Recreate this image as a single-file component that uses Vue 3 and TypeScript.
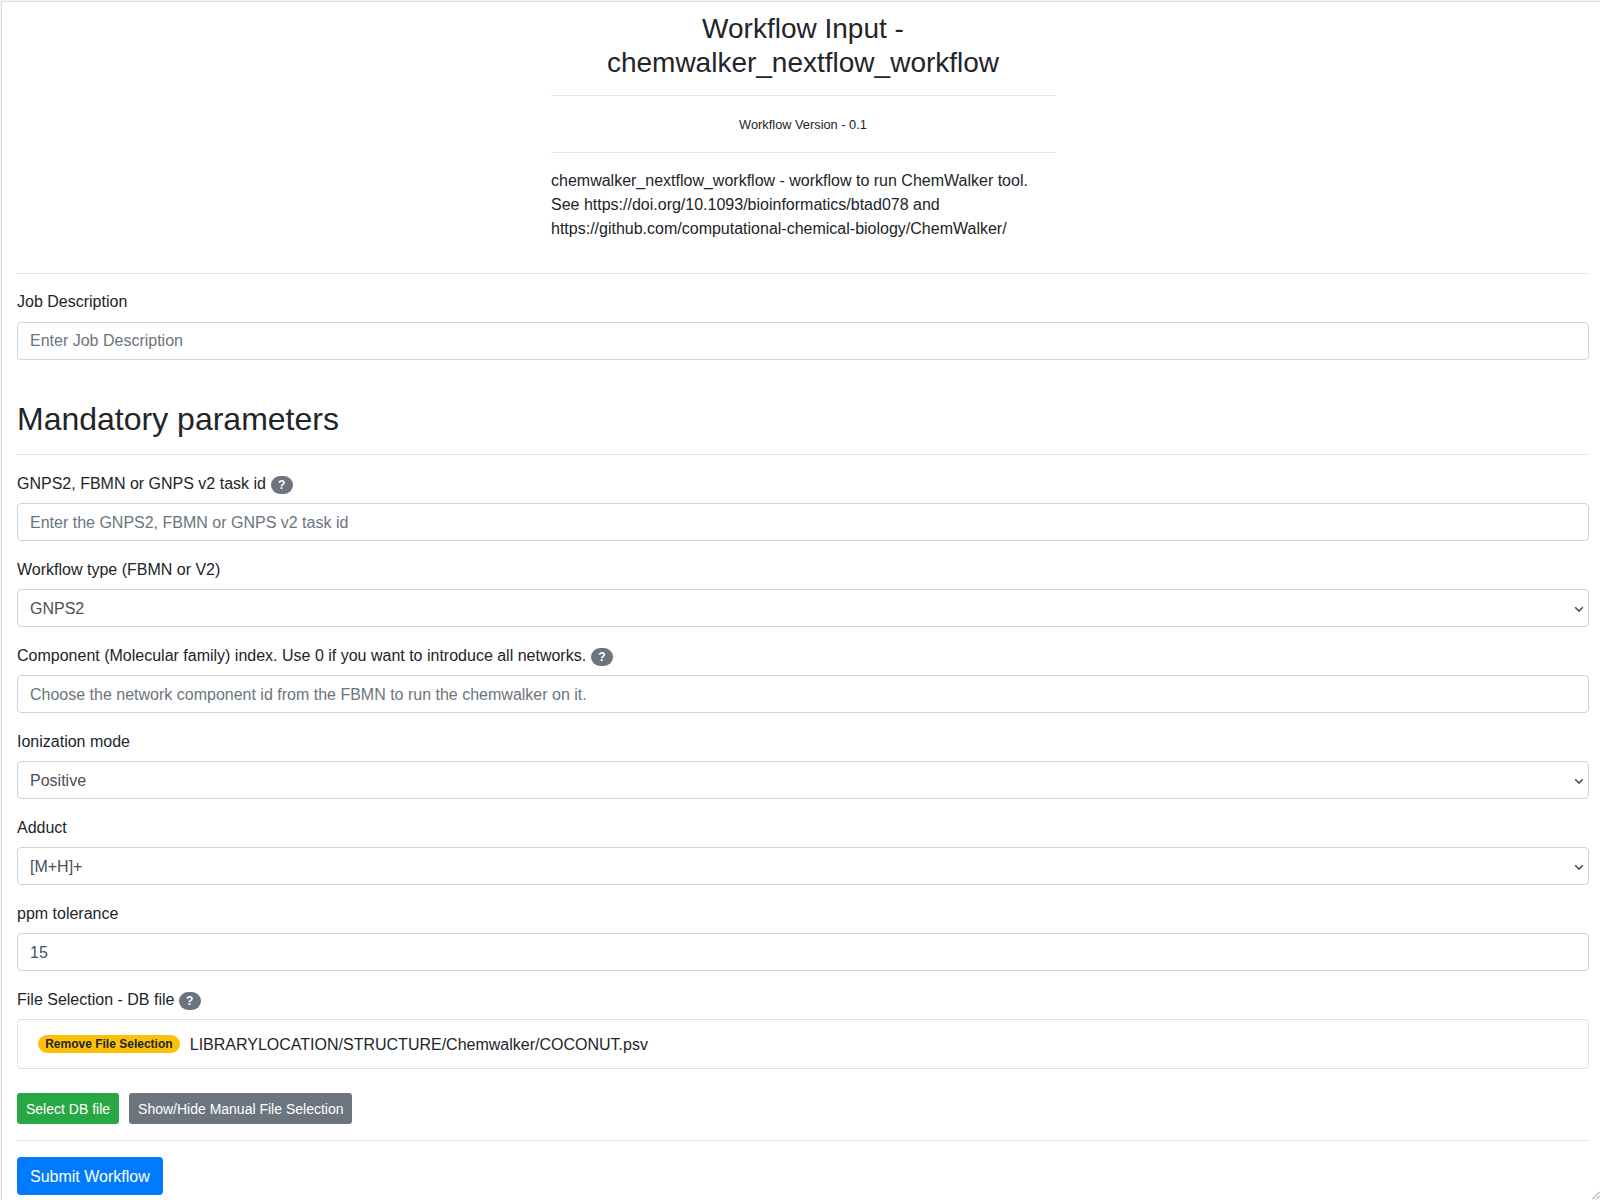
<script setup lang="ts">
import { ref } from 'vue'

interface Field {
  id: string
  label: string
  kind: 'text' | 'select'
  value: string
  placeholder?: string
  help?: boolean
}

const description = ref('')
const fields = ref<Field[]>([
  { id: 'task', label: 'GNPS2, FBMN or GNPS v2 task id', kind: 'text', value: '', placeholder: 'Enter the GNPS2, FBMN or GNPS v2 task id', help: true },
  { id: 'type', label: 'Workflow type (FBMN or V2)', kind: 'select', value: 'GNPS2' },
  { id: 'component', label: 'Component (Molecular family) index. Use 0 if you want to introduce all networks.', kind: 'text', value: '', placeholder: 'Choose the network component id from the FBMN to run the chemwalker on it.', help: true },
  { id: 'mode', label: 'Ionization mode', kind: 'select', value: 'Positive' },
  { id: 'adduct', label: 'Adduct', kind: 'select', value: '[M+H]+' },
  { id: 'ppm', label: 'ppm tolerance', kind: 'text', value: '15' },
])
</script>

<template>
  <div class="page">
    <div class="card">
      <header class="intro">
        <h3>Workflow Input - chemwalker_nextflow_workflow</h3>
        <hr />
        <div class="version"><span>Workflow Version - 0.1</span></div>
        <hr />
        <p>chemwalker_nextflow_workflow - workflow to run ChemWalker tool. See https://doi.org/10.1093/bioinformatics/btad078 and https://github.com/computational-chemical-biology/ChemWalker/</p>
      </header>
      <hr class="split" />
      <div class="group">
        <label for="description">Job Description</label>
        <input id="description" v-model="description" class="control" placeholder="Enter Job Description" />
      </div>
      <h2>Mandatory parameters</h2>
      <hr />
      <section class="params">
        <div v-for="f in fields" :key="f.id" class="group">
          <label :for="f.id">{{ f.label }} <span v-if="f.help" class="badge help shifted">?</span></label>
          <div v-if="f.kind === 'select'" class="select">
            <select :id="f.id" v-model="f.value" class="control">
              <option>{{ f.value }}</option>
            </select>
            <svg class="chevron" width="10" height="7" viewBox="0 0 10 7"><path d="M1.2 1.2 5 5l3.8-3.8" /></svg>
          </div>
          <input v-else :id="f.id" v-model="f.value" class="control" :placeholder="f.placeholder" />
        </div>
        <label>File Selection - DB file <span class="badge help">?</span></label>
        <div class="file">
          <span class="badge remove">Remove File Selection</span>
          <span class="path">LIBRARYLOCATION/STRUCTURE/Chemwalker/COCONUT.psv</span>
        </div>
      </section>
      <div class="actions">
        <button class="btn small green">Select DB file</button>
        <button class="btn small gray">Show/Hide Manual File Selection</button>
      </div>
      <hr />
      <button class="btn blue">Submit Workflow</button>
      <svg class="grip" width="8" height="9" viewBox="0 0 8 9"><path d="M0 8.5 8 .5M4 8.5l4-4" /></svg>
    </div>
  </div>
</template>

<style>
html, body { margin: 0; overflow: hidden; background: #fff; }
</style>

<style scoped>
*, *::before, *::after { box-sizing: border-box; }
.page { height: 1200px; padding: 1px 0 0 1px; background: #f2f2f2; overflow: hidden; }
.card {
  position: relative;
  height: 1199px;
  padding: 0.1px 11px 0 15px;
  border: solid #dfdfdf;
  border-width: 1px 0 0 1px;
  background: #fff;
  overflow: hidden;
  font: 400 16px/24px "Liberation Sans", Arial, sans-serif;
  color: #212529;
}
.intro { width: 504px; margin: 9.5px auto 0; }
h2, h3 { margin: 0 0 8px; font-weight: 400; line-height: 1.2; }
h3 { height: 67.4px; font-size: 28px; line-height: 34px; text-align: center; }
h2 { font-size: 32px; margin-top: 40px; }
hr { margin: 16px 0; border: 0; border-top: 1px solid rgba(0, 0, 0, 0.1); }
.version { height: 24px; text-align: center; }
.version span { font-size: 12.8px; }
p { margin: 0 0 16px; }
.split { margin-top: 32px; }
.group { margin-bottom: 16px; }
label { display: block; height: 24px; margin-bottom: 8px; }
.control {
  display: block;
  width: 100%;
  height: 38px;
  padding: 6px 12px;
  border: 1px solid #ced4da;
  border-radius: 4px;
  background: #fff;
  color: #495057;
  font: inherit;
}
.params label { padding-top: 1px; }
.params .control { padding: 7px 12px 5px; }
.select { position: relative; }
select.control { appearance: none; }
.chevron { position: absolute; right: 5px; top: 17px; fill: none; stroke: #495057; stroke-width: 1.6; }
.control::placeholder { color: #6c757d; opacity: 1; }
.badge {
  display: inline-block;
  padding: 3px 7.2px;
  border-radius: 160px;
  font-size: 12px;
  font-weight: 700;
  line-height: 1;
  vertical-align: baseline;
}
.help { background: #6c757d; color: #fff; }
.shifted { margin-left: 0.5px; }
.remove { background: #ffc107; color: #212529; margin-right: 10px; }
.file { display: flex; align-items: center; height: 50px; padding: 0 20px; border: 1px solid #dfdfdf; border-radius: 4px; }
.path { padding-top: 2px; }
.actions { display: flex; gap: 10px; margin-top: 24px; }
.btn { font: inherit; border: 0; padding: 8px 13px 6px; border-radius: 4px; color: #fff; display: block; }
.small { font-size: 14px; line-height: 21px; padding: 6px 9px 4px; border-radius: 3.2px; }
.green { background: #28a745; }
.gray { background: #6c757d; padding-right: 8.4px; }
.blue { background: #007bff; }
.grip { position: absolute; right: 0; bottom: 0; fill: none; stroke: #888; }
</style>
